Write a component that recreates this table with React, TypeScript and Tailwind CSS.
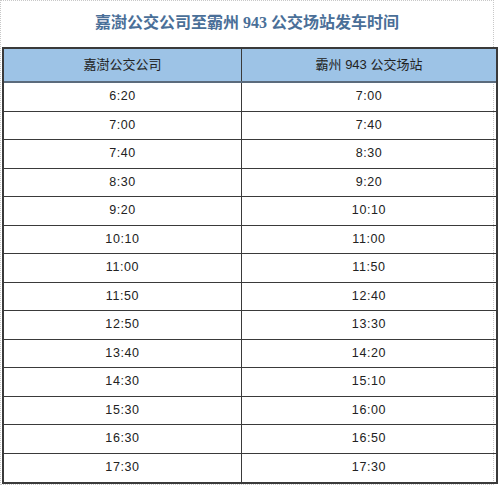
import React from "react";

const rows: [string, string][] = [
  ["6:20", "7:00"],
  ["7:00", "7:40"],
  ["7:40", "8:30"],
  ["8:30", "9:20"],
  ["9:20", "10:10"],
  ["10:10", "11:00"],
  ["11:00", "11:50"],
  ["11:50", "12:40"],
  ["12:50", "13:30"],
  ["13:40", "14:20"],
  ["14:30", "15:10"],
  ["15:30", "16:00"],
  ["16:30", "16:50"],
  ["17:30", "17:30"],
];

export default function App() {
  return (
    <div className="w-[500px] h-[485px] bg-white overflow-hidden">
      <div className="w-[494px] h-[485px] border border-dotted border-[#c8c8c8]">
        <div className="h-[46px] flex items-center justify-center pb-[2px]">
          <span
            className="text-[16px] font-bold text-[#4a6f98]"
            style={{ fontFamily: '"Liberation Serif", "Noto Sans CJK SC", serif' }}
          >
            嘉澍公交公司至霸州 943 公交场站发车时间
          </span>
        </div>
        <div
          className="ml-[1px] w-[496px] border-2 border-[#3a3a3a] text-[#222]"
          style={{ fontFamily: '"Liberation Sans", "Noto Sans CJK SC", sans-serif' }}
        >
          <div className="grid grid-cols-[238px_1fr] h-[34px] bg-[#9dc3e6] border-b-2 border-[#5b6b7c] text-[13px]">
            <div className="flex items-center justify-center border-r border-[#3a3a3a]">嘉澍公交公司</div>
            <div className="flex items-center justify-center">霸州 943 公交场站</div>
          </div>
          {rows.map(([a, b], i) => (
            <div
              key={i}
              className={
                "grid grid-cols-[238px_1fr] h-[28.5px] text-[12.5px] tracking-[0.6px] " +
                (i < rows.length - 1 ? "border-b border-[#3a3a3a]" : "")
              }
            >
              <div className="flex items-center justify-center border-r border-[#3a3a3a]">{a}</div>
              <div className="flex items-center justify-center">{b}</div>
            </div>
          ))}
        </div>
      </div>
    </div>
  );
}
